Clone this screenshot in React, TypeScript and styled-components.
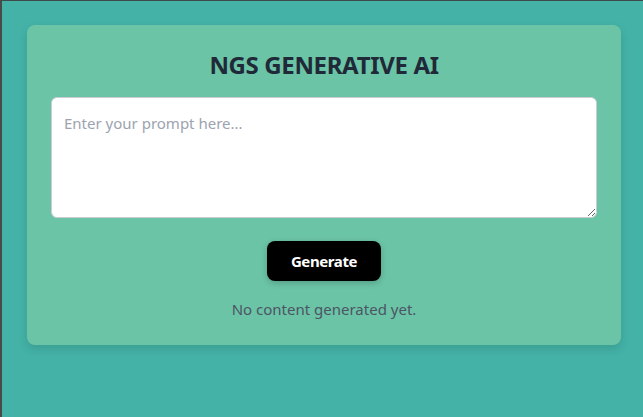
import React, { useState } from "react";
import styled, { createGlobalStyle } from "styled-components";

const GlobalStyle = createGlobalStyle`
  html, body {
    margin: 0;
    padding: 0;
    height: 100%;
  }
  body {
    background: #44b2a7;
    font-family: "Noto Sans", "Open Sans", "Liberation Sans", sans-serif;
  }
  #root {
    min-height: 100%;
  }
`;

const Page = styled.div`
  box-sizing: border-box;
  min-height: 417px;
  background: #44b2a7;
  border-left: 2px solid #4a4a4a;
  border-top: 1px solid #3e4a4a;
  padding: 24px 22px 24px 25px;
`;

const Card = styled.div`
  background: #6bc4a6;
  border-radius: 8px;
  padding: 24px;
  display: flex;
  flex-direction: column;
  align-items: center;
  box-shadow: 0 4px 10px rgba(0, 0, 0, 0.12);
`;

const Title = styled.h1`
  margin: 0 0 16px;
  font-size: 24px;
  line-height: 32px;
  font-weight: 700;
  color: #1f2937;
  letter-spacing: -0.35px;
`;

const Prompt = styled.textarea`
  box-sizing: border-box;
  width: 100%;
  height: 121px;
  border: 1px solid #c9ced6;
  border-radius: 6px;
  padding: 13px 12px;
  font-family: "Noto Sans", "Open Sans", sans-serif;
  font-size: 15px;
  line-height: 24px;
  color: #1f2937;
  background: #ffffff;
  resize: vertical;
  outline: none;
  &::placeholder {
    color: #9ca3af;
  }
`;

const Button = styled.button`
  margin-top: 23px;
  background: #000000;
  color: #ffffff;
  border: none;
  border-radius: 8px;
  padding: 8px 24px;
  font-family: "Noto Sans", "Open Sans", sans-serif;
  font-size: 15px;
  line-height: 24px;
  font-weight: 700;
  letter-spacing: -0.4px;
  cursor: pointer;
  box-shadow: 0 2px 6px rgba(0, 0, 0, 0.2);
`;

const Status = styled.p`
  margin: 16px 0 0;
  font-size: 15px;
  line-height: 24px;
  color: #4b5563;
`;

export default function App() {
  const [prompt, setPrompt] = useState("");
  return (
    <>
      <GlobalStyle />
      <Page>
        <Card>
          <Title>NGS GENERATIVE AI</Title>
          <Prompt
            placeholder="Enter your prompt here..."
            value={prompt}
            onChange={(e) => setPrompt(e.target.value)}
          />
          <Button>Generate</Button>
          <Status>No content generated yet.</Status>
        </Card>
      </Page>
    </>
  );
}
